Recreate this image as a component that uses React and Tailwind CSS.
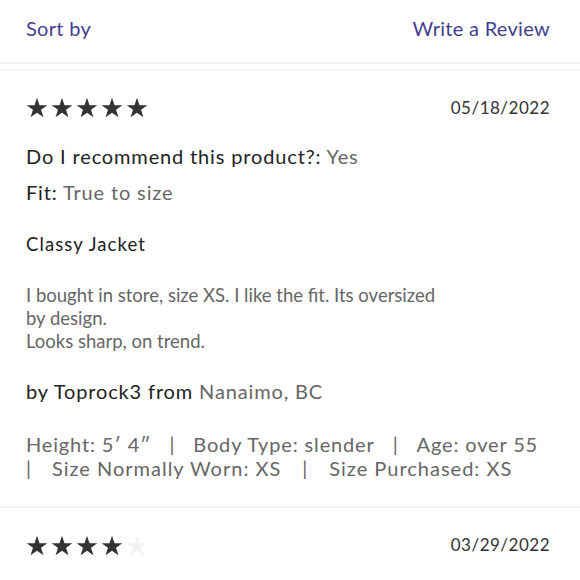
import React from "react";

const Star = ({ filled }) => (
  <svg width="22" height="21" viewBox="0 0 24 23" className="shrink-0">
    <path
      d="M12 0.8l2.75 8.2h8.6l-6.95 5.1 2.65 8.2L12 17.2l-7.05 5.1 2.65-8.2L0.65 9h8.6z"
      fill={filled ? "#333333" : "#f1f1f1"}
    />
  </svg>
);

const Stars = ({ n }) => (
  <div className="flex gap-[3px]">
    {[0, 1, 2, 3, 4].map((i) => (
      <Star key={i} filled={i < n} />
    ))}
  </div>
);

const Sep = () => <span className="mx-[18px]">|</span>;

const lato = { fontFamily: "Lato, 'Open Sans', sans-serif" };

export default function App() {
  return (
    <div className="w-[580px] h-[580px] overflow-hidden bg-white" style={lato}>
      <div className="flex justify-between items-center pl-[26px] pr-[30px] h-[62px] pb-[6px] text-[20px] tracking-[0.3px] text-[#433f8f]">
        <span>Sort by</span>
        <span>Write a Review</span>
      </div>
      <div className="h-[2px] bg-[#f1f1f1]" />
      <div className="h-[5px]" />
      <div className="h-[2px] bg-[#f4f4f4]" />

      <div className="pl-[26px] pr-[30px]">
        <div className="flex justify-between items-center h-[73px]">
          <Stars n={5} />
          <span className="text-[17px] text-[#333] tracking-[0.5px]">05/18/2022</span>
        </div>
        <div className="text-[20px] tracking-[0.85px] text-[#222] leading-[24px]">
          Do I recommend this product?: <span className="text-[#666]">Yes</span>
        </div>
        <div className="text-[20px] tracking-[0.85px] text-[#222] leading-[24px] mt-[12px]">
          Fit: <span className="text-[#666]">True to size</span>
        </div>
        <div className="text-[18.5px] text-[#222] leading-[24px] mt-[28px] tracking-[1.1px]">
          Classy Jacket
        </div>
        <div className="text-[18.5px] text-[#666] leading-[23px] mt-[28px]">
          I bought in store, size XS. I like the fit. Its oversized
          <br />
          by design.
          <br />
          Looks sharp, on trend.
        </div>
        <div className="text-[20px] tracking-[0.85px] text-[#222] leading-[24px] mt-[26px]">
          by Toprock3 from <span className="text-[#666]">Nanaimo, BC</span>
        </div>
        <div className="text-[20px] tracking-[0.85px] text-[#666] leading-[24px] mt-[29px] whitespace-nowrap">
          <span>Height: 5′ 4″</span>
          <Sep />
          <span>Body Type: slender</span>
          <Sep />
          <span>Age: over 55</span>
          <br />
          <span className="mr-[20px]">|</span>
          <span className="tracking-[1px]">Size Normally Worn: XS</span>
          <span className="mx-[21px]">|</span>
          <span className="tracking-[1px]">Size Purchased: XS</span>
        </div>
      </div>
      <div className="h-[2px] bg-[#f3f3f3] mt-[26px]" />
      <div className="pl-[26px] pr-[30px]">
        <div className="flex justify-between items-center h-[74px]">
          <Stars n={4} />
          <span className="text-[17px] text-[#333] tracking-[0.5px]">03/29/2022</span>
        </div>
      </div>
    </div>
  );
}
